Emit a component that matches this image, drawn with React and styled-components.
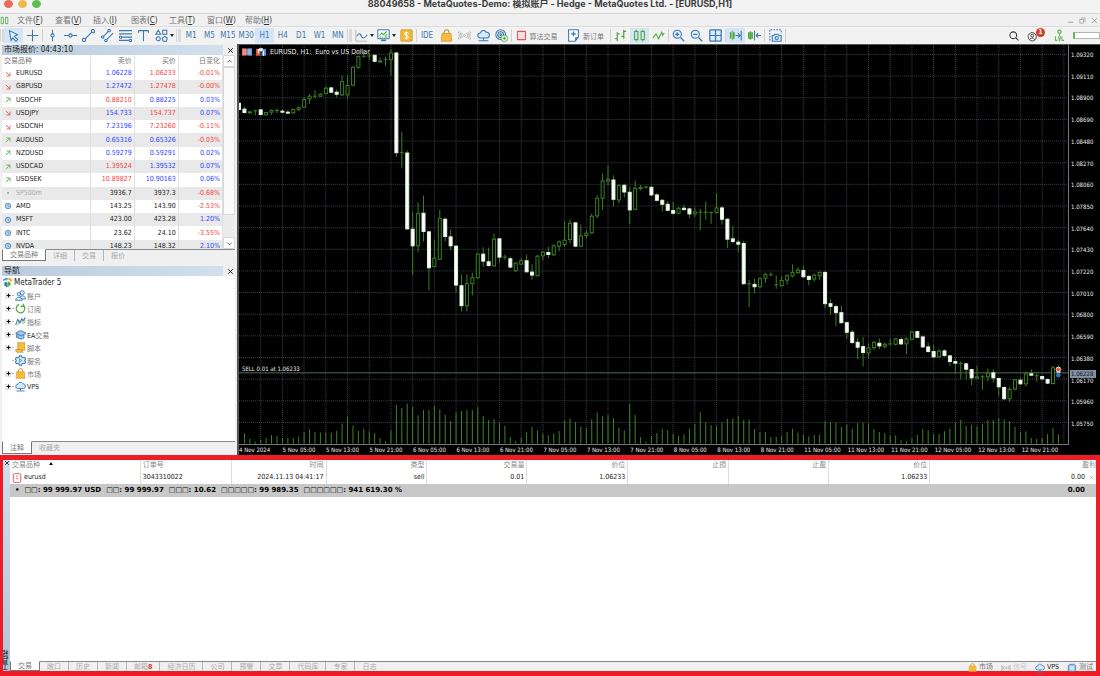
import React from 'react';
import styled, { createGlobalStyle, css } from 'styled-components';

const BLUE = '#3a78b0';
const GREEN = '#49a83c';
const UI_FONT = '"DejaVu Sans Condensed", "DejaVu Sans", "Noto Sans CJK SC", sans-serif';

const GlobalStyle = createGlobalStyle`
  * { box-sizing: border-box; }
  body {
    margin: 0;
    background: #f0f0f0;
    color: #222;
    font-family: ${UI_FONT};
    font-size: 7px;
  }
  button {
    margin: 0;
    padding: 0;
    border: 0;
    background: none;
    color: inherit;
    font: inherit;
  }
  svg { display: block; }
`;

/* ---------- data ---------- */

const menus = [
  ['文件', 'F'], ['查看', 'V'], ['插入', 'I'], ['图表', 'C'],
  ['工具', 'T'], ['窗口', 'W'], ['帮助', 'H'],
];

const timeframes = ['M1', 'M5', 'M15', 'M30', 'H1', 'H4', 'D1', 'W1', 'MN'];

// symbol, trend, bid, bid colour, ask, ask colour, change
const quotes = [
  ['EURUSD', 'down', '1.06228', 'b', '1.06233', 'r', '-0.01%'],
  ['GBPUSD', 'down', '1.27472', 'b', '1.27478', 'r', '-0.00%'],
  ['USDCHF', 'up', '0.88210', 'r', '0.88225', 'b', '0.03%'],
  ['USDJPY', 'down', '154.733', 'b', '154.737', 'r', '0.07%'],
  ['USDCNH', 'down', '7.23196', 'b', '7.23260', 'r', '-0.11%'],
  ['AUDUSD', 'up', '0.65316', 'b', '0.65326', 'b', '-0.03%'],
  ['NZDUSD', 'up', '0.59279', 'b', '0.59291', 'b', '0.02%'],
  ['USDCAD', 'up', '1.39524', 'r', '1.39532', 'b', '0.07%'],
  ['USDSEK', 'up', '10.89827', 'r', '10.90163', 'b', '0.06%'],
  ['SP500m', 'dot', '3936.7', 'k', '3937.3', 'k', '-0.68%'],
  ['AMD', 'clock', '143.25', 'k', '143.90', 'k', '-2.53%'],
  ['MSFT', 'clock', '423.00', 'k', '423.28', 'k', '1.20%'],
  ['INTC', 'clock', '23.62', 'k', '24.10', 'k', '-3.55%'],
  ['NVDA', 'clock', '148.23', 'k', '148.32', 'k', '2.10%'],
];

// icon, latin part, chinese part
const tree = [
  ['users', '', '账户'], ['cycle', '', '订阅'], ['indicator', '', '指标'], ['cap', 'EA', '交易'],
  ['script', '', '脚本'], ['gear', '', '服务'], ['bag', '', '市场'], ['cloud', 'VPS', ''],
];

const prices = Array.from({ length: 18 }, (_, i) => (1.0932 - i * 0.0021).toFixed(5));

const times = [
  '4 Nov 2024', '5 Nov 05:00', '5 Nov 13:00', '5 Nov 21:00', '6 Nov 05:00', '6 Nov 13:00',
  '6 Nov 21:00', '7 Nov 05:00', '7 Nov 13:00', '7 Nov 21:00', '8 Nov 05:00', '8 Nov 13:00',
  '8 Nov 21:00', '11 Nov 05:00', '11 Nov 13:00', '11 Nov 21:00', '12 Nov 05:00',
  '12 Nov 13:00', '12 Nov 21:00',
];

// bearish flag, high, body top, body bottom, low (chart units)
const candles = [
  [1,189,189,210,210],[1,200,207,219,221],[0,213,215,220,222],[0,209,213,213,227],[1,207,209,225,227],
  [0,216,217,226,227],[0,209,211,218,225],[0,206,212,212,220],[1,208,213,218,219],[1,211,216,220,221],
  [0,207,208,220,221],[0,199,203,210,213],[0,171,178,203,204],[0,162,168,178,192],[0,150,169,169,175],
  [0,160,162,170,171],[0,140,144,162,164],[1,140,143,158,160],[1,149,156,164,173],[0,108,124,166,168],
  [0,106,136,166,176],[0,79,81,137,139],[0,47,49,83,87],[0,31,49,49,53],[0,40,48,48,60],
  [1,44,45,65,67],[0,52,62,66,68],[0,50,58,58,78],[0,28,38,60,106],[1,36,38,340,352],
  [0,276,339,339,386],[1,332,339,569,571],[1,516,568,620,706],[0,489,521,620,638],[1,468,520,577,606],
  [1,574,576,686,753],[0,600,655,682,684],[0,511,535,660,662],[1,534,538,592,606],[1,570,591,620,632],
  [1,617,619,738,758],[1,705,738,800,816],[0,704,731,800,816],[0,700,714,734,768],[0,641,643,716,718],
  [1,623,643,666,682],[1,624,666,679,682],[0,582,598,680,682],[1,596,597,654,670],[0,645,653,653,660],
  [1,652,657,684,686],[0,668,670,695,697],[0,656,663,675,677],[1,646,663,698,700],[1,674,697,708,721],
  [0,647,649,710,711],[0,634,637,650,663],[1,622,638,646,656],[0,614,618,647,649],[0,603,606,621,635],
  [0,545,601,616,622],[0,540,550,601,611],[1,547,549,621,623],[0,555,588,621,623],[0,571,580,589,597],
  [0,522,529,581,583],[0,467,475,530,536],[0,401,423,477,511],[0,377,418,425,438],[1,407,420,480,501],
  [0,434,437,482,491],[1,432,436,458,473],[1,441,457,512,554],[0,423,445,510,512],[0,436,442,448,452],
  [0,438,442,442,447],[1,439,442,467,469],[1,460,465,483,486],[1,479,481,495,516],[1,484,493,513,515],
  [1,487,512,522,525],[0,502,505,522,524],[1,495,505,511,513],[1,504,507,524,536],[0,504,516,524,532],
  [0,507,518,518,573],[0,486,518,518,540],[0,516,519,519,553],[0,460,504,520,522],[1,500,504,540,555],
  [1,536,538,600,626],[1,558,597,607,612],[1,600,607,615,638],[1,604,611,734,736],[0,722,733,733,803],
  [1,718,734,743,762],[0,714,717,743,745],[0,700,705,717,730],[0,698,706,706,710],[0,708,736,736,748],
  [0,710,722,740,742],[0,704,708,723,736],[0,675,698,711,714],[0,683,691,701,703],[1,678,692,713,715],
  [1,707,710,721,738],[0,703,706,720,726],[0,696,698,710,723],[1,696,698,794,806],[1,780,792,802,826],
  [1,796,801,821,860],[1,798,819,851,853],[1,847,849,880,898],[1,872,878,911,913],[1,896,908,925,960],
  [1,893,921,941,982],[0,912,925,942,958],[0,904,909,926,932],[1,898,911,921,930],[0,910,914,922,928],
  [0,898,914,914,918],[0,896,898,916,918],[1,894,900,915,917],[0,894,898,915,945],[0,875,877,901,903],
  [1,874,876,895,897],[1,888,892,924,926],[1,910,922,938,940],[1,918,936,954,956],[0,930,935,954,956],
  [1,930,934,950,952],[1,947,949,968,980],[1,958,966,973,1004],[0,966,973,973,1020],[1,971,973,991,1020],
  [1,988,990,1017,1038],[0,980,1012,1018,1020],[0,1008,1013,1013,1052],[0,988,1001,1014,1026],[1,990,1000,1017,1030],
  [1,1015,1017,1044,1070],[1,1042,1044,1080,1082],[0,1044,1050,1080,1088],[0,1019,1021,1051,1053],[1,1015,1022,1035,1037],
  [0,997,1003,1035,1042],[1,990,1003,1009,1011],[0,1003,1010,1010,1028],[1,1009,1011,1020,1022],[1,1018,1020,1033,1035],
  [0,980,985,1034,1036],[1,980,984,1000,1004],
];

const volumes = [
  0,31,14,6,12,17,26,23,17,17,17,21,35,43,35,33,33,33,39,61,80,54,38,45,37,32,17,7,40,116,107,120,110,
  85,101,101,114,103,87,68,94,98,101,101,110,83,71,74,63,54,20,8,19,35,50,40,30,25,31,38,70,76,65,51,46,
  73,94,83,86,77,49,40,120,86,20,6,23,32,45,41,29,24,28,45,59,94,64,56,53,64,75,75,83,71,73,44,35,35,20,
  20,24,35,45,33,26,22,26,27,67,65,63,50,57,45,62,64,61,44,35,32,25,25,10,7,17,26,45,41,29,29,37,45,62,
  72,54,57,51,60,71,71,77,73,68,51,36,37,17,14,17,29,48,28,
];

const summary = [
  '□□: 99 999.97 USD', '□□: 99 999.97', '□□□: 10.62', '□□□□□: 99 989.35', '□□□□□□: 941 619.30 %',
];

/* ---------- icons ---------- */

const s = (stroke = BLUE, width = 1.3) => ({ fill: 'none', stroke, strokeWidth: width });

const icons = {
  cursor: <path d="M3 2l10 5-4 2 4 4-2 2-4-4-2 3z" {...s()} fill="#e4f1fc" />,
  cross: <path d="M8 1v14M1 8h14M6 8h4M8 6v4" {...s()} />,
  vline: <g {...s()}><path d="M8 1v5M8 10v5" /><circle cx="8" cy="8" r="2" /></g>,
  hline: <g {...s()}><path d="M0 8h6M10 8h6" /><circle cx="8" cy="8" r="2" /></g>,
  trend: <g {...s()}><path d="M3.500 12.500L12.500 3.500" /><circle cx="2.500" cy="13.500" r="2" /><circle cx="13.500" cy="2.500" r="2" /></g>,
  channel: <g {...s()}><path d="M3 9l6-6M7 13l8-8" /><circle cx="2" cy="10" r="1.500" /><circle cx="10" cy="2" r="1.500" /><circle cx="6" cy="14" r="1.500" /></g>,
  fibo: <g {...s()}><path d="M0 2h16M0 6h16M4 10h12M0 14h12" /><circle cx="2" cy="10" r="1.500" /><circle cx="14" cy="14" r="1.500" /></g>,
  text: <path d="M2 2h12M8 2v13M2 1.500v3M14 1.500v3" {...s()} />,
  shapes: <g {...s()}><path d="M4 1.500L7 6.500H1z" /><rect x="9.500" y="1.500" width="5" height="5" /><circle cx="4" cy="12" r="2.500" /><path d="M12 9l3 2-1 4h-4l-1-4z" /></g>,
  line: <g fill="none"><path d="M1 1v14h14" stroke="#aaa" /><path d="M2 9c3-5 5-3 6 0s4 3 7-2" stroke={BLUE} strokeWidth="1.300" /></g>,
  template: <g><rect x="1" y="1" width="14" height="11" rx="1" {...s()} fill="#fff" /><path d="M3 8l3-3 2 2 4-4" {...s(GREEN)} /><path d="M4 9v2M7 9v2M10 7v4M12 6v5" {...s(GREEN, 1)} /><path d="M5 14h6" {...s(BLUE, 2)} /></g>,
  dollar: <g><rect x="1" y="1" width="14" height="14" rx="1" fill="#f0b93a" stroke="#d1952a" /><path d="M10.500 5.500c-1-1.500-5-1.500-5 .5s5 1.500 5 4-4 2-5 .5M8 3v10" {...s('#fff', 1.2)} /></g>,
  bag: <g><path d="M5 6V4a3 3 0 016 0v2" {...s('#c98e24')} /><path d="M2.500 5.500h11l1 9.500h-13z" fill="#f4bd3d" stroke="#d79a2b" /></g>,
  signal: <g {...s('#aaa', 1.100)}><circle cx="8" cy="8" r="1.200" /><path d="M5.500 5a4 4 0 000 6M10.500 5a4 4 0 010 6M3.500 4a6 6 0 000 8M12.500 4a6 6 0 010 8M1.500 3a8 8 0 000 10M14.500 3a8 8 0 010 10" /></g>,
  cloud: <g {...s()}><path d="M4 11a3 3 0 010-6 4 4 0 017.500-1A3.500 3.500 0 0112 11z" fill="#d4eafb" /><path d="M8 11v3M2 14.500h12" /></g>,
  radar: <g><g {...s()}><circle cx="7" cy="7" r="6" /><circle cx="7" cy="7" r="3.500" /><circle cx="7" cy="7" r="1" /></g><circle cx="11.500" cy="11.500" r="4" fill="#eafbe6" stroke={GREEN} /><path d="M9.500 11.500h4M11.500 9.500v4" {...s(GREEN)} /></g>,
  stop: <rect x="2" y="2" width="12" height="12" rx="1" fill="#fbdcdc" stroke="#d8595a" strokeWidth="1.500" />,
  order: <g><path d="M2 1h12v9l-4 5H2z" {...s()} fill="#fff" /><path d="M14 10h-4v5z" fill={BLUE} /><path d="M5 6h6M8 3v6" {...s(BLUE, 1.600)} /></g>,
  bars: <path d="M4 4v11M1 12h3M4 6h3M12 1v11M9 9h3M12 3h3" {...s(GREEN, 1.500)} />,
  candles: <g {...s(GREEN)}><rect x="2" y="3" width="4" height="10" /><rect x="10" y="3" width="4" height="10" /><path d="M4 1v2M4 13v2M12 1v2M12 13v2" /></g>,
  zigzag: <path d="M1 11l4-5 3 6 4-8 1 4 2-3" {...s(GREEN)} />,
  zoomIn: <g {...s()}><circle cx="6.500" cy="6.500" r="5" fill="#e1f0fc" /><path d="M10.500 10.500L15 15M4 6.500h5M6.500 4v5" strokeWidth="1.600" /></g>,
  zoomOut: <g {...s()}><circle cx="6.500" cy="6.500" r="5" fill="#e1f0fc" /><path d="M10.500 10.500L15 15M4 6.500h5" strokeWidth="1.600" /></g>,
  tiles: <g {...s(BLUE, 1.500)}><rect x="1" y="1" width="14" height="14" rx="1" fill="#d9ecfb" /><path d="M8 1v14M1 8h14" /></g>,
  scroll: <g><path d="M2 4v8M6 4v8" {...s(GREEN, 2)} /><path d="M4 2v12" {...s(GREEN, 1)} /><path d="M8 8h5M11 5.500L13.500 8 11 10.500M15 2v12" {...s()} /></g>,
  shift: <g><path d="M1 4v8M5 4v8" {...s(GREEN, 2)} /><path d="M3 3v10" {...s(GREEN, 2)} /><path d="M8 2v12M10 8h6M12.500 5.500L10 8l2.500 2.500" {...s()} /></g>,
  camera: <g {...s()}><path d="M1 14V1h14v5" strokeDasharray="2 1.500" /><path d="M4 8h2l1-1.500h4L12 8h3v7H4z" fill="#d9ecfb" /><circle cx="9.500" cy="11.200" r="2" /></g>,
  search: <g {...s('#333', 1.400)}><circle cx="7" cy="7" r="4.500" /><path d="M10.500 10.500L14 14" /></g>,
  account: <g {...s('#444')}><circle cx="7" cy="9" r="5.500" /><circle cx="7" cy="7.500" r="1.800" /><path d="M3.500 13c1-3 6-3 7 0" /></g>,
  level: <g><circle cx="8" cy="3.500" r="2" {...s('#62b856', 1.600)} /><path d="M8 6v3M3 9v5h2.500M6.500 9l1.500 5 1.500-5M11 9v5h2.500" {...s('#62b856', 1.300)} /></g>,
  users: <g {...s()} fill="#d9ecfb"><circle cx="10.500" cy="4" r="3" /><path d="M6 13c0-6 9-6 9.500 0z" /><circle cx="5.500" cy="6" r="2.500" /><path d="M1 15c0-6 9-6 9.500 0z" /></g>,
  cycle: <path d="M6 2a6.300 6.300 0 106 1M12 1v4h-4" {...s(GREEN, 1.700)} />,
  indicator: <g fill="none"><path d="M1 13l3-8 3 5 3-6 2 3 3-5" stroke={BLUE} strokeWidth="1.500" /><path d="M3 14c2 0 2-8 5-8s2 5 4 5 2-4 3-6" stroke={GREEN} /></g>,
  cap: <g {...s()} fill="#9cc8ec"><path d="M4 8v5c2 2 7 2 9 0V8" /><path d="M1 6l7-4 8 4-7 4z" /><path d="M2 7v6" /></g>,
  script: <g fill="#f2bd42" stroke="#c98e24"><path d="M4 1h10v11H4z" /><path d="M1 11h9c0 3 2 4 2 4H3c-2 0-2-3-2-4z" /></g>,
  gear: <g {...s(BLUE, 1.500)}><path d="M6.500 1h3l.5 2 2 1 2-.7 1.500 2.600L14 8l1.500 2.100-1.500 2.600-2-.7-2 1-.5 2h-3L6 13l-2-1-2 .7L.500 10.100 2 8 .500 5.900 2 3.300 4 4l2-1z" fill="#d9ecfb" /><path d="M6.500 5.500l4 2.500-4 2.500z" strokeWidth="1" /></g>,
  chip: <g {...s()}><rect x="3" y="3" width="10" height="10" rx="1" fill="#cfe6f8" /><path d="M5 1v2M8 1v2M11 1v2M5 13v2M8 13v2M11 13v2M1 5h2M1 8h2M1 11h2M13 5h2M13 8h2M13 11h2" /></g>,
  logo: <g><path d="M1 4c3-3 6-3 8-2L7 5C5 4 3 5 2 6z" fill="#4f9fd8" /><path d="M9 1c4 0 6 2 6 5l-3 1c0-2-1-3-3-3z" fill="#f0b331" /><path d="M4 7l4 1-1 7-4-3z" fill="#3d78b8" /><path d="M9 6l4 3c-1 4-3 5-6 6z" fill="#56ad41" /></g>,
  doc: <g><rect x="2" y="1" width="12" height="14" rx="2" fill="#fff" stroke="#d8595a" strokeWidth="1.500" /><path d="M6 5h4M6 9h4" {...s('#d8595a')} /></g>,
  depth: <g><rect x="0" y="2" width="7.500" height="12" fill="#e2574c" /><rect x="8.500" y="2" width="7.500" height="12" fill="#4f8fd0" /><path d="M1 5h14M1 8h14M1 11h14" {...s('#fff', 1)} /></g>,
  panel: <g><rect x="0" y="3" width="7" height="11" fill="#e2574c" /><rect x="9" y="3" width="7" height="11" fill="#4f8fd0" /><path d="M4 3v7M12 6v8" {...s('#fff', 2)} /><path d="M5 2h6v3l-3 2-3-2z" fill="#fff" /></g>,
  up: <path d="M4 12l8-8M5 4h7v7" {...s(GREEN, 1.600)} />,
  down: <path d="M4 4l8 8M12 5v7H5" {...s('#d9534a', 1.600)} />,
  dot: <circle cx="8" cy="8" r="2" fill="#999" />,
  clock: <g><circle cx="8" cy="8" r="5.500" fill="#b9daf3" stroke={BLUE} strokeWidth="1.500" /><path d="M8 5v3.500h2.500" {...s()} /></g>,
  close: <path d="M3 3l10 10M13 3L3 13" {...s('#111', 2.200)} />,
  closeThin: <path d="M2 2l12 12M14 2L2 14" {...s('#888', 1.500)} />,
  minimize: <path d="M2 12h12" {...s('#999', 2)} />,
  restore: <g {...s('#999', 1.500)}><rect x="2" y="6" width="8" height="8" /><path d="M6 6V2h8v8h-4" /></g>,
  chevUp: <path d="M3 10l5-5 5 5" {...s('#444', 1.800)} />,
  chevDown: <path d="M3 6l5 5 5-5" {...s('#444', 1.800)} />,
  expand: <path d="M8 2v12M2 8h12" {...s('#000', 3)} />,
};

const Icon = ({ name, size = 13 }) => (
  <svg width={size} height={size} viewBox="0 0 16 16" aria-hidden="true">{icons[name]}</svg>
);

/* ---------- styled parts ---------- */

const Window = styled.div`
  display: flex;
  flex-direction: column;
  min-height: 100vh;
`;

const TitleBar = styled.header`
  position: relative;
  height: 14px;
  border-bottom: 1px solid #d4d4d4;
  background: #f3f3f3;
  text-align: center;
`;

const Title = styled.h1`
  margin: 0;
  color: #3c3c3c;
  font: 700 9px/8px Inter, "Noto Sans CJK SC", sans-serif;
  white-space: nowrap;
`;

const Lights = styled.div`
  position: absolute;
  top: 0;
  left: 4px;
  display: flex;
  gap: 5px;
`;

const Light = styled.button`
  width: 9px;
  height: 8px;
  border-radius: 50%;
  background: ${(p) => p.$color};
`;

const MenuBar = styled.nav`
  display: flex;
  align-items: center;
  height: 12px;
  background: #f0f0f0;
  font-size: 8px;
  line-height: 12px;
`;

const MenuLogo = styled.span`
  width: 17px;
  overflow: hidden;
`;

const MenuItem = styled.button`
  width: 38px;
  padding-top: 1px;
  color: #333;
  text-align: left;
  white-space: nowrap;
`;

const Soft = styled.span`
  color: #777;
`;

const WindowButtons = styled.div`
  display: flex;
  gap: 5px;
  margin-left: auto;
  padding-right: 2px;
`;

const Toolbar = styled.div`
  display: flex;
  align-items: center;
  height: 18px;
  border-top: 1px solid #dcdcdc;
  background: #f2f2f2;
  color: ${BLUE};
  font-size: 8px;
`;

const Grip = styled.span`
  width: ${(p) => p.$w}px;
  height: 13px;
  border-left: 1px solid #d6d6d6;
  background: linear-gradient(90deg, transparent 1px, #dadada 1px, #dadada 4px, transparent 4px);
`;

const Divider = styled.span`
  width: 1px;
  height: 13px;
  background: #d0d0d0;
`;

const ToolGroup = styled.div`
  display: grid;
  grid-auto-flow: column;
  grid-auto-columns: 1fr;
  width: ${(p) => p.$w}px;
`;

const Tool = styled.button`
  display: flex;
  align-items: center;
  justify-content: center;
  min-width: 0;
  gap: 2px;
  height: 15px;
  white-space: nowrap;
  ${(p) => p.$active && css`
    background: #d5e5f5;
  `}
`;

const ToolLabel = styled.span`
  padding-left: 1px;
  color: #777;
  font-size: 7px;
`;

const Caret = styled.span`
  border: 2px solid transparent;
  border-top: 3px solid #222;
  border-bottom: 0;
`;

const Status = styled.div`
  display: flex;
  align-items: center;
  gap: 7px;
  margin-left: auto;
`;

const AccountButton = styled.button`
  position: relative;
`;

const Badge = styled.span`
  position: absolute;
  top: -2px;
  right: -6px;
  width: 9px;
  height: 9px;
  border-radius: 50%;
  background: #d93a26;
  color: #fff;
  font-size: 7px;
  font-weight: 700;
  line-height: 9px;
  text-align: center;
`;

const Battery = styled.span`
  width: 27px;
  height: 7px;
  border: 1px solid #b5b5b5;
  border-left: 2px solid #62b856;
  background: #fff;
`;

const Main = styled.main`
  display: flex;
  flex: 411 0 0;
  min-height: 0;
`;

const Sidebar = styled.aside`
  display: flex;
  flex-direction: column;
  flex: 0 0 237px;
  padding: 1px 2px 1px 2px;
  background: #f0f0f0;
`;

const PanelHead = styled.div`
  display: flex;
  align-items: center;
  justify-content: space-between;
  height: 10px;
  padding: 0 1px 0 2px;
  background: linear-gradient(90deg, #b9cbdc, #d2e0ed 95%, #eee 95%);
  font-size: 8px;
  line-height: 10px;
`;

const MarketBody = styled.div`
  display: flex;
  height: 194px;
  overflow: hidden;
  background: #fff;
`;

const QuoteTable = styled.table`
  flex: 1;
  width: 100%;
  min-width: 0;
  height: 198px;
  border-collapse: collapse;
  table-layout: fixed;
  line-height: 9px;
`;

const QuoteHead = styled.th`
  width: ${(p) => (p.$left ? '40%' : 'auto')};
  height: 12px;
  padding: 0 2px;
  border-right: 1px solid #e4e4e4;
  color: #777;
  font-weight: 400;
  text-align: ${(p) => (p.$left ? 'left' : 'right')};
`;

const QuoteRow = styled.tr`
  &:nth-child(even) {
    background: #e9e9e9;
  }
`;

const tones = { b: '#2f3fff', r: '#f0433c', k: '#222', g: '#aaa' };

const QuoteCell = styled.td`
  padding: 0 2px;
  border-right: 1px solid #dedede;
  color: ${(p) => tones[p.$tone]};
  text-align: right;
`;

const Symbol = styled.span`
  display: flex;
  align-items: center;
  gap: 4px;
`;

const Scrollbar = styled.div`
  display: flex;
  flex: 0 0 12px;
  flex-direction: column;
  justify-content: space-between;
  background: #ececec;
`;

const ScrollButton = styled.button`
  display: flex;
  align-items: center;
  justify-content: center;
  height: 12px;
  border: 1px solid #d8d8d8;
  border-radius: 1px;
  background: #fcfcfc;
`;

const ScrollThumb = styled.div`
  height: 148px;
  margin-bottom: auto;
  border: 1px solid #d8d8d8;
  background: #fafafa;
`;

const Tabs = styled.div`
  display: flex;
  flex: none;
  height: ${(p) => p.$h}px;
  border-top: 1px solid #8a8a8a;
`;

const Tab = styled.button`
  display: flex;
  align-items: center;
  padding: 1px 7px 0;
  border-right: 1px solid ${(p) => (p.$last ? 'transparent' : '#b5b5b5')};
  color: #aaa;
  line-height: 9px;
  ${(p) => p.$active && css`
    margin-top: -1px;
    border: 1px solid #777;
    border-top-color: #fff;
    background: #fff;
    color: #777;
  `}
`;

const TabCount = styled.span`
  align-self: flex-end;
  color: #e03a2a;
  font-weight: 700;
  line-height: 7px;
`;

const Navigator = styled.section`
  display: flex;
  flex: 1;
  flex-direction: column;
  margin-top: 5px;
`;

const Tree = styled.ul`
  flex: 1;
  margin: 0;
  padding: 0;
  background: #fff;
  list-style: none;
`;

const TreeRoot = styled.li`
  display: flex;
  align-items: center;
  gap: 1px;
  height: 13px;
  font-size: 8px;
`;

const TreeItem = styled.li`
  display: flex;
  align-items: center;
  gap: 1px;
  height: 13px;
  padding-left: 3px;
`;

const Expander = styled.button`
  display: flex;
  align-items: center;
  justify-content: center;
  width: 6px;
  height: 6px;
  background: ${(p) => (p.$leaf ? 'none' : '#e6e6e6')};
`;

const Branch = styled.span`
  width: 2px;
  height: 1px;
  background: #bbb;
`;

const Chart = styled.section`
  display: grid;
  flex: 1;
  grid-template-columns: minmax(0, 1fr) 31px;
  grid-template-rows: minmax(0, 1fr) 10px;
  border: solid #555;
  border-width: 1px 0 0 2px;
  background: #000;
  color: #eee;
  font-size: 6px;
  line-height: 7px;
  white-space: nowrap;
`;

const Plot = styled.div`
  position: relative;
  border-right: 1px solid #777;
  border-bottom: 1px solid #777;

  > svg {
    position: absolute;
    width: 100%;
    height: 100%;
  }
`;

const ChartTitle = styled.div`
  position: absolute;
  top: 2px;
  left: 3px;
  display: flex;
  align-items: center;
  gap: 4px;
  font-size: 7px;
  line-height: 10px;
  white-space: pre;
`;

const OrderLabel = styled.div`
  position: absolute;
  bottom: 18%;
  left: 3px;
`;

const PriceAxis = styled.div`
  position: relative;
  display: flex;
  flex-direction: column;
  justify-content: space-between;
  padding: 6px 0 18px 2px;
`;

const PriceTag = styled.div`
  position: absolute;
  top: 81.2%;
  left: 1px;
  width: 26px;
  padding-left: 1px;
  background: #8390a3;
  color: #111;
  line-height: 8px;
`;

const TimeAxis = styled.div`
  display: flex;
  grid-column: 1 / 3;
  padding: 1px 31px 0 0;
`;

const TimeLabel = styled.span`
  flex: 0 0 5.24%;
`;

// grows less than its drawn share because the frame adds 10px of its own
const Toolbox = styled.section`
  display: flex;
  flex: 211 0 0;
  min-height: 0;
  border: solid #ee1c25;
  border-width: 5px 4px 5px 3px;
  background: #fff;
`;

const ToolboxEdge = styled.div`
  display: flex;
  flex: 0 0 7px;
  flex-direction: column;
  justify-content: space-between;
  align-items: center;
  overflow: hidden;
  background: linear-gradient(#cfdfed, #b3c4d6);
`;

const EdgeTitle = styled.span`
  writing-mode: vertical-rl;
  transform: rotate(180deg);
  line-height: 7px;
`;

const ToolboxBody = styled.div`
  display: flex;
  flex: 1;
  flex-direction: column;
  min-width: 0;
`;

const TradeTable = styled.table`
  width: 100%;
  border-collapse: collapse;
  table-layout: fixed;
  line-height: 9px;
`;

const TradeHead = styled.th`
  width: ${(p) => p.$w}%;
  height: 11px;
  padding: 0 ${(p) => (p.$edge ? 0 : 2)}px;
  border-right: ${(p) => (p.$edge ? 0 : 1)}px solid #ddd;
  color: #888;
  font-weight: 400;
  text-align: ${(p) => (p.$left ? 'left' : 'right')};
  white-space: nowrap;
`;

const TradeCell = styled.td`
  height: 13px;
  padding: 0 2px;
  border-right: ${(p) => (p.$edge ? 0 : 1)}px solid #ddd;
  text-align: ${(p) => (p.$left ? 'left' : 'right')};
`;

const TradeSymbol = styled.span`
  display: flex;
  align-items: center;
  gap: 2px;
`;

const Profit = styled.span`
  display: flex;
  align-items: center;
  justify-content: flex-end;
  gap: 4px;
`;

const SortMark = styled.span`
  display: inline-block;
  margin: 0 0 2px 9px;
  border: 2px solid transparent;
  border-top: 0;
  border-bottom: 3px solid #111;
`;

const SummaryBar = styled.div`
  display: flex;
  gap: 5px;
  padding: 0 11px 0 5px;
  background: #c8c8c8;
  color: #000;
  font: 700 7px/13px "DejaVu Sans", sans-serif;
  white-space: nowrap;
`;

const SummaryProfit = styled.span`
  margin-left: auto;
`;

const ToolboxFooter = styled.div`
  display: flex;
  height: 10px;
  margin-top: auto;
  border-top: 1px solid #8a8a8a;
  background: #f0f0f0;

  ${Tabs} {
    margin-top: -1px;
  }
`;

const FooterLinks = styled.div`
  display: flex;
  align-items: center;
  gap: 8px;
  margin-left: auto;
  padding: 2px 3px 0 0;
`;

const FooterLink = styled.button`
  display: flex;
  align-items: center;
  gap: 2px;
  color: ${(p) => p.$color};
  line-height: 9px;
`;

/* ---------- components ---------- */

const T = ({ name, label, active, children }) => (
  <Tool type="button" aria-label={label || name} $active={active}>
    <Icon name={name} />
    {children}
  </Tool>
);

function TopToolbar() {
  return (
    <Toolbar>
      <Grip $w={4} />
      <ToolGroup $w={38}>
        <T name="cursor" active />
        <T name="cross" />
      </ToolGroup>
      <Divider />
      <ToolGroup $w={110}>
        {['vline', 'hline', 'trend', 'channel', 'fibo', 'text'].map((n) => <T key={n} name={n} />)}
      </ToolGroup>
      <ToolGroup $w={23}><T name="shapes"><Caret /></T></ToolGroup>
      <Grip $w={6} />
      <ToolGroup $w={165}>
        {timeframes.map((tf) => <Tool key={tf} type="button" $active={tf === 'H1'}>{tf}</Tool>)}
      </ToolGroup>
      <Grip $w={6} />
      <ToolGroup $w={44}>
        <T name="line"><Caret /></T>
        <T name="template"><Caret /></T>
      </ToolGroup>
      <ToolGroup $w={19}><T name="dollar" /></ToolGroup>
      <Divider />
      <ToolGroup $w={20}><Tool type="button">IDE</Tool></ToolGroup>
      <ToolGroup $w={74}>
        {['bag', 'signal', 'cloud', 'radar'].map((n) => <T key={n} name={n} />)}
      </ToolGroup>
      <Divider />
      <ToolGroup $w={49}>
        <Tool type="button"><Icon name="stop" size={11} /><ToolLabel>算法交易</ToolLabel></Tool>
      </ToolGroup>
      <ToolGroup $w={49}>
        <Tool type="button"><Icon name="order" /><ToolLabel>新订单</ToolLabel></Tool>
      </ToolGroup>
      <Divider />
      <ToolGroup $w={57}>
        <T name="bars" />
        <T name="candles" active />
        <T name="zigzag" />
      </ToolGroup>
      <Divider />
      <ToolGroup $w={56}>
        {['zoomIn', 'zoomOut', 'tiles'].map((n) => <T key={n} name={n} />)}
      </ToolGroup>
      <Divider />
      <ToolGroup $w={38}>
        <T name="scroll" active />
        <T name="shift" />
      </ToolGroup>
      <Divider />
      <ToolGroup $w={20}><T name="camera" /></ToolGroup>
      <Divider />
      <Status>
        <button type="button" aria-label="search"><Icon name="search" size={12} /></button>
        <AccountButton type="button" aria-label="account">
          <Icon name="account" size={12} />
          <Badge>1</Badge>
        </AccountButton>
        <span />
        <Icon name="level" />
        <Battery />
      </Status>
    </Toolbar>
  );
}

function MarketWatch() {
  return (
    <section>
      <PanelHead>
        <span>市场报价: 04:43:10</span>
        <button type="button" aria-label="close"><Icon name="close" size={7} /></button>
      </PanelHead>
      <MarketBody>
        <QuoteTable>
          <thead>
            <tr>
              <QuoteHead $left>交易品种</QuoteHead>
              <QuoteHead>卖价</QuoteHead>
              <QuoteHead>买价</QuoteHead>
              <QuoteHead>日变化</QuoteHead>
            </tr>
          </thead>
          <tbody>
            {quotes.map(([symbol, trend, bid, bidTone, ask, askTone, change]) => (
              <QuoteRow key={symbol}>
                <QuoteCell $tone={trend === 'dot' ? 'g' : 'k'}>
                  <Symbol><Icon name={trend} size={8} />{symbol}</Symbol>
                </QuoteCell>
                <QuoteCell $tone={bidTone}>{bid}</QuoteCell>
                <QuoteCell $tone={askTone}>{ask}</QuoteCell>
                <QuoteCell $tone={change[0] === '-' ? 'r' : 'b'}>{change}</QuoteCell>
              </QuoteRow>
            ))}
          </tbody>
        </QuoteTable>
        <Scrollbar>
          <ScrollButton type="button" aria-label="up"><Icon name="chevUp" size={7} /></ScrollButton>
          <ScrollThumb />
          <ScrollButton type="button" aria-label="down"><Icon name="chevDown" size={7} /></ScrollButton>
        </Scrollbar>
      </MarketBody>
      <Tabs $h={12}>
        <Tab type="button" $active>交易品种</Tab>
        <Tab type="button">详细</Tab>
        <Tab type="button">交易</Tab>
        <Tab type="button" $last>报价</Tab>
      </Tabs>
    </section>
  );
}

function NavigatorPanel() {
  return (
    <Navigator>
      <PanelHead>
        <span>导航</span>
        <button type="button" aria-label="close"><Icon name="close" size={7} /></button>
      </PanelHead>
      <Tree>
        <TreeRoot><Icon name="logo" size={11} />MetaTrader 5</TreeRoot>
        {tree.map(([icon, latin, label]) => (
          <TreeItem key={icon}>
            <Expander type="button" aria-label="expand" $leaf={icon === 'gear'}>
              {icon !== 'gear' && <Icon name="expand" size={5} />}
            </Expander>
            <Branch />
            <Icon name={icon} size={11} />
            <span>{latin}<Soft>{label}</Soft></span>
          </TreeItem>
        ))}
      </Tree>
      <Tabs $h={13}>
        <Tab type="button" $active>注释</Tab>
        <Tab type="button" $last>收藏夹</Tab>
      </Tabs>
    </Navigator>
  );
}

const STEP = 16.3;
const BASE = 1214;

function PriceChart() {
  return (
    <Chart>
      <Plot>
        <svg viewBox="0 15 2490 1200" preserveAspectRatio="none">
          <g stroke="#3a414a" strokeWidth="3" strokeDasharray="3 3">
            {Array.from({ length: 38 }, (_, i) => {
              const x = (i + 1) * 4 * STEP;
              return <line key={x} x1={x} x2={x} y1="15" y2={BASE} />;
            })}
            {prices.map((p, i) => (
              <line key={p} x1="0" x2="2490" y1={43.5 + i * 65.1} y2={43.5 + i * 65.1} />
            ))}
          </g>
          <line x1="0" x2="2490" y1="1001" y2="1001" stroke="#4f6f56" strokeWidth="3" />
          <g stroke="#3f8428" strokeWidth="3">
            {volumes.map((v, i) => (
              <line key={i} x1={i * STEP} x2={i * STEP} y1={BASE - v} y2={BASE} />
            ))}
          </g>
          {candles.map(([bear, high, top, bottom, low], i) => {
            const x = i * STEP;
            return (
              <g key={i} stroke="#3a8022" strokeWidth="3">
                <line x1={x} x2={x} y1={high} y2={low} />
                {top === bottom
                  ? <line x1={x - 6} x2={x + 6} y1={top} y2={top} />
                  : (
                    <rect
                      x={x - 4.5}
                      y={top + 1}
                      width="9"
                      height={Math.max(bottom - top - 2, 3)}
                      fill={bear ? '#fff' : '#000'}
                      stroke={bear ? '#e2f3dc' : '#3a8022'}
                    />
                  )}
              </g>
            );
          })}
          <path d="M2461 983l8 8-8 8-8-8z" fill="#f04a32" stroke="#fff" strokeWidth="2" />
          <circle cx="2461" cy="1008" r="7" fill="#2f6fc0" />
        </svg>
        <ChartTitle>
          <Icon name="depth" size={10} />
          <Icon name="panel" size={10} />
          {'EURUSD, H1:  Euro vs US Dollar'}
        </ChartTitle>
        <OrderLabel>SELL 0.01 at 1.06233</OrderLabel>
      </Plot>
      <PriceAxis>
        {prices.map((p) => <span key={p}>{p}</span>)}
        <PriceTag>1.06228</PriceTag>
      </PriceAxis>
      <TimeAxis>
        {times.map((t) => <TimeLabel key={t}>{t}</TimeLabel>)}
      </TimeAxis>
    </Chart>
  );
}

function ToolboxPanel() {
  return (
    <Toolbox>
      <ToolboxEdge>
        <button type="button" aria-label="close"><Icon name="close" size={6} /></button>
        <EdgeTitle>工具箱</EdgeTitle>
      </ToolboxEdge>
      <ToolboxBody>
        <TradeTable>
          <thead>
            <tr>
              <TradeHead $w={12} $left>交易品种<SortMark /></TradeHead>
              <TradeHead $w={8.4} $left>订单号</TradeHead>
              <TradeHead $w={8.7}>时间</TradeHead>
              <TradeHead $w={9.3}>类型</TradeHead>
              <TradeHead $w={9.2}>交易量</TradeHead>
              <TradeHead $w={9.3}>价位</TradeHead>
              <TradeHead $w={9.3}>止损</TradeHead>
              <TradeHead $w={9.2}>止盈</TradeHead>
              <TradeHead $w={9.3}>价位</TradeHead>
              <TradeHead $w={15.3} $edge>盈利</TradeHead>
            </tr>
          </thead>
          <tbody>
            <tr>
              <TradeCell $left><TradeSymbol><Icon name="doc" size={10} />eurusd</TradeSymbol></TradeCell>
              <TradeCell $left>3043310022</TradeCell>
              <TradeCell>2024.11.13 04:41:17</TradeCell>
              <TradeCell>sell</TradeCell>
              <TradeCell>0.01</TradeCell>
              <TradeCell>1.06233</TradeCell>
              <TradeCell />
              <TradeCell />
              <TradeCell>1.06233</TradeCell>
              <TradeCell $edge>
                <Profit>
                  0.00
                  <button type="button" aria-label="close position"><Icon name="closeThin" size={5} /></button>
                </Profit>
              </TradeCell>
            </tr>
          </tbody>
        </TradeTable>
        <SummaryBar>
          <span>•</span>
          {summary.map((part) => <span key={part}>{part}</span>)}
          <SummaryProfit>0.00</SummaryProfit>
        </SummaryBar>
        <ToolboxFooter>
          <Tabs $h={10}>
            <Tab type="button" $active>交易</Tab>
            <Tab type="button">敞口</Tab>
            <Tab type="button">历史</Tab>
            <Tab type="button">新闻</Tab>
            <Tab type="button">邮箱<TabCount>8</TabCount></Tab>
            <Tab type="button">经济日历</Tab>
            <Tab type="button">公司</Tab>
            <Tab type="button">预警</Tab>
            <Tab type="button">文章</Tab>
            <Tab type="button">代码库</Tab>
            <Tab type="button">专家</Tab>
            <Tab type="button" $last>日志</Tab>
          </Tabs>
          <FooterLinks>
            <FooterLink type="button" $color="#777"><Icon name="bag" size={9} />市场</FooterLink>
            <FooterLink type="button" $color="#ccc"><Icon name="signal" size={10} />信号</FooterLink>
            <FooterLink type="button" $color="#222"><Icon name="cloud" size={10} />VPS</FooterLink>
            <FooterLink type="button" $color="#777"><Icon name="chip" size={10} />测试</FooterLink>
          </FooterLinks>
        </ToolboxFooter>
      </ToolboxBody>
    </Toolbox>
  );
}

export default function App() {
  return (
    <Window>
      <GlobalStyle />
      <TitleBar>
        <Lights>
          <Light type="button" aria-label="close" $color="#ec6a5e" />
          <Light type="button" aria-label="minimize" $color="#f0b94c" />
          <Light type="button" aria-label="zoom" $color="#5cc04e" />
        </Lights>
        <Title>88049658 - MetaQuotes-Demo: 模拟账户 - Hedge - MetaQuotes Ltd. - [EURUSD,H1]</Title>
      </TitleBar>
      <MenuBar>
        <MenuLogo><Icon name="candles" size={9} /></MenuLogo>
        {menus.map(([label, key]) => (
          <MenuItem key={key} type="button"><Soft>{label}</Soft>(<u>{key}</u>)</MenuItem>
        ))}
        <WindowButtons>
          <button type="button" aria-label="minimize"><Icon name="minimize" size={7} /></button>
          <button type="button" aria-label="restore"><Icon name="restore" size={7} /></button>
          <button type="button" aria-label="close"><Icon name="closeThin" size={7} /></button>
        </WindowButtons>
      </MenuBar>
      <TopToolbar />
      <Main>
        <Sidebar>
          <MarketWatch />
          <NavigatorPanel />
        </Sidebar>
        <PriceChart />
      </Main>
      <ToolboxPanel />
    </Window>
  );
}
